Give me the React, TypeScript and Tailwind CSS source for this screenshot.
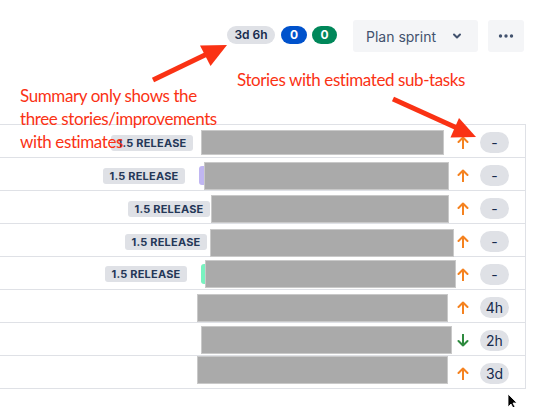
import React from "react";

type Row = {
  lozenge?: { mt: number; gap: number };
  bar?: { color: string; w: number; mt: number; h: number };
  gray: { w: number; mr: number; mt: number; h: number };
  dir: "up" | "down";
  est: string;
};

const rows: Row[] = [
  { lozenge: { mt: 10, gap: 8 }, gray: { w: 243, mr: 12, mt: 5, h: 25 }, dir: "up", est: "-" },
  { lozenge: { mt: 10, gap: 14 }, bar: { color: "#c0b6f2", w: 5, mt: 8, h: 19 }, gray: { w: 245, mr: 7, mt: 4, h: 28 }, dir: "up", est: "-" },
  { lozenge: { mt: 10, gap: 1 }, gray: { w: 238, mr: 7, mt: 4, h: 28 }, dir: "up", est: "-" },
  { lozenge: { mt: 10, gap: 3 }, gray: { w: 244, mr: 2, mt: 5, h: 28 }, dir: "up", est: "-" },
  { lozenge: { mt: 9, gap: 14 }, bar: { color: "#79f2c0", w: 4, mt: 7, h: 20 }, gray: { w: 251, mr: 0, mt: 3, h: 28 }, dir: "up", est: "-" },
  { gray: { w: 251, mr: 8, mt: 4, h: 28 }, dir: "up", est: "4h" },
  { gray: { w: 251, mr: 4, mt: 3, h: 28 }, dir: "down", est: "2h" },
  { gray: { w: 251, mr: 8, mt: 0, h: 28 }, dir: "up", est: "3d" },
];

function Priority({ dir }: { dir: "up" | "down" }) {
  if (dir === "up") {
    return (
      <svg width="12" height="13" viewBox="0 0 12 13">
        <path d="M6 12.5V1.5M1.5 6L6 1.5L10.5 6" stroke="#f5821f" strokeWidth="2" fill="none" strokeLinecap="round" strokeLinejoin="round" />
      </svg>
    );
  }
  return (
    <svg width="12" height="13" viewBox="0 0 12 13">
      <path d="M6 0.5V11.5M1.5 7L6 11.5L10.5 7" stroke="#2d8a3e" strokeWidth="2" fill="none" strokeLinecap="round" strokeLinejoin="round" />
    </svg>
  );
}

export default function App() {
  return (
    <div className="relative w-[552px] h-[407px] bg-white overflow-hidden font-['Inter',sans-serif]">
      {/* header */}
      <div className="h-[124px] pt-[20px] pr-[28px] flex justify-end items-start">
        <div className="flex items-center h-[32px]">
          <div className="w-[48px] h-[18px] mt-[-3px] rounded-full bg-[#dfe1e6] text-[12px] font-semibold text-[#172b4d] flex items-center justify-center">
            3d 6h
          </div>
          <div className="ml-[6px] w-[26px] h-[18px] mt-[-3px] rounded-full bg-[#0052cc] text-[12px] font-bold text-white flex items-center justify-center">
            0
          </div>
          <div className="ml-[5px] w-[25px] h-[18px] mt-[-3px] rounded-full bg-[#00875a] text-[12px] font-bold text-white flex items-center justify-center">
            0
          </div>
          <div className="ml-[16px] w-[125px] h-[32px] rounded-[3px] bg-[#f4f5f7] flex items-center pl-[13px] text-[14px] text-[#42526e]">
            <span>Plan sprint</span>
            <svg className="ml-[16px]" width="10" height="8" viewBox="0 0 10 8">
              <path d="M2 2.5L5 5.5L8 2.5" stroke="#42526e" strokeWidth="2" fill="none" strokeLinecap="round" strokeLinejoin="round" />
            </svg>
          </div>
          <div className="ml-[10px] w-[36px] h-[32px] rounded-[3px] bg-[#f4f5f7] flex items-center justify-center">
            <svg width="16" height="4" viewBox="0 0 16 4">
              <circle cx="2.5" cy="2" r="1.7" fill="#42526e" />
              <circle cx="8" cy="2" r="1.7" fill="#42526e" />
              <circle cx="13.5" cy="2" r="1.7" fill="#42526e" />
            </svg>
          </div>
        </div>
      </div>

      {/* list */}
      <div className="w-[526px] border-t border-r border-[#dfe1e6]">
        {rows.map((r, i) => (
          <div key={i} className="flex h-[33px] border-b border-[#dfe1e6]">
            <div className="flex-1 flex justify-end items-start">
              {r.lozenge && (
                <div
                  className="w-[82px] h-[16px] rounded-[3px] bg-[#dfe1e6] text-[11px] font-bold text-[#253858] flex items-center justify-center tracking-[0.2px]"
                  style={{ marginTop: r.lozenge.mt, marginRight: r.lozenge.gap }}
                >
                  1.5 RELEASE
                </div>
              )}
              {r.bar && (
                <div
                  className="rounded-l-[3px]"
                  style={{ width: r.bar.w, height: r.bar.h, marginTop: r.bar.mt, background: r.bar.color }}
                />
              )}
              <div
                className="bg-[#aaaaaa] border border-[#c9c9c9]"
                style={{ width: r.gray.w, height: r.gray.h, marginTop: r.gray.mt, marginRight: r.gray.mr }}
              />
            </div>
            <div className="w-[69px] flex items-center pt-[3px] pr-[16px]">
              <div className="w-[14px] flex justify-center">
                <Priority dir={r.dir} />
              </div>
              <div className="ml-[10px] w-[29px] h-[21px] rounded-full bg-[#dfe1e6] text-[14px] text-[#172b4d] flex items-center justify-center">
                {r.est}
              </div>
            </div>
          </div>
        ))}
      </div>

      {/* annotations */}
      <div className="absolute left-[20px] top-[84px] text-[17px] leading-[23px] tracking-[-0.4px] text-[#fa3214] font-['Lato',sans-serif] whitespace-nowrap">
        <div>Summary only shows the</div>
        <div>three stories/improvements</div>
        <div>with estimates</div>
      </div>
      <div className="absolute left-[237px] top-[68px] text-[17px] leading-[23px] tracking-[-0.4px] text-[#fa3214] font-['Lato',sans-serif] whitespace-nowrap">
        Stories with estimated sub-tasks
      </div>
      <svg className="absolute left-0 top-0" width="552" height="407" viewBox="0 0 552 407">
        <line x1="153" y1="80" x2="207" y2="54" stroke="#fa3214" strokeWidth="5" />
        <polygon points="227,45 200,45.5 210.5,66" fill="#fa3214" />
        <line x1="393" y1="99" x2="457" y2="128" stroke="#fa3214" strokeWidth="5" />
        <polygon points="476,137 459,118 450.5,137.5" fill="#fa3214" />
        {/* cursor */}
        <path d="M508 394 L508 407 L511 404 L514 410 L516 409 L513 403 L517 403 Z" fill="#000" stroke="#fff" strokeWidth="0.8" />
      </svg>
    </div>
  );
}
